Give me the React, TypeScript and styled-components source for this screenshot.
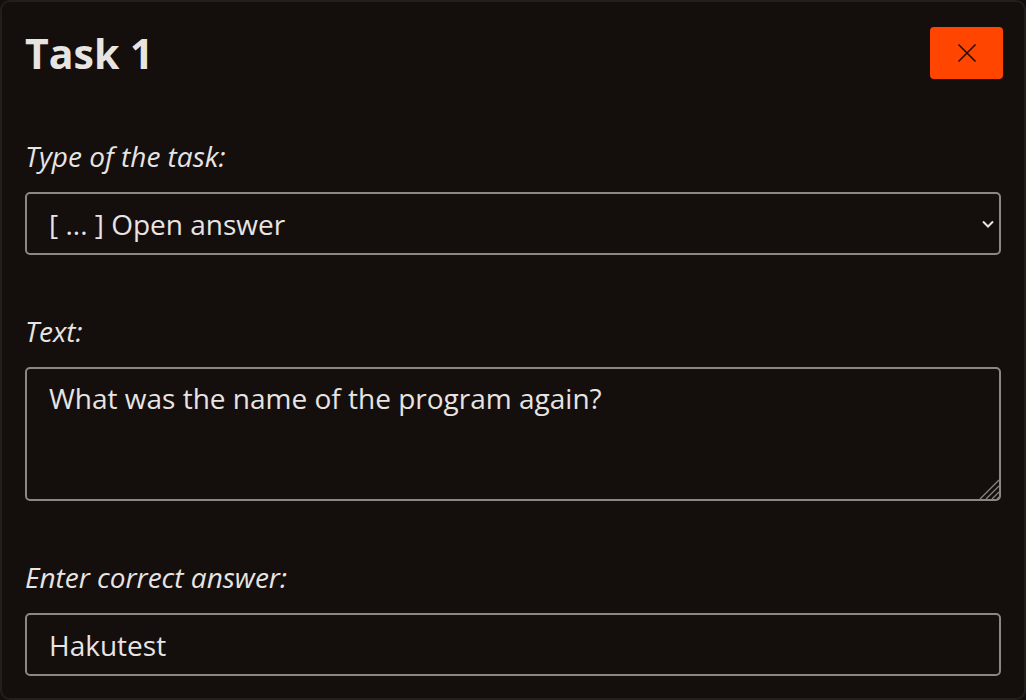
import styled, { createGlobalStyle } from "styled-components";

const GlobalStyle = createGlobalStyle`
  html, body {
    margin: 0;
    padding: 0;
    background: #140e0c;
  }
  body {
    font-family: "Open Sans", "Noto Sans", sans-serif;
    color: #e8e4e2;
  }
`

const Card = styled.div`
  box-sizing: border-box;
  width: 1026px;
  height: 700px;
  overflow: hidden;
  background: #140e0c;
  border: 2px solid #241e1b;
  border-radius: 10px;
  padding: 21px 23px 0 23px;
  display: flex;
  flex-direction: column;
  gap: 57px;
`

const Header = styled.div`
  display: flex;
  justify-content: space-between;
  align-items: flex-start;
`

const Title = styled.h1`
  margin: 4px 0 0;
  font-size: 41px;
  font-weight: 700;
  line-height: 53px;
  color: #e8e4e2;
`

const CloseButton = styled.button`
  width: 73px;
  height: 52px;
  margin: 4px -2px 0 0;
  padding: 0;
  border: none;
  border-radius: 4px;
  background: #ff4500;
  display: flex;
  align-items: center;
  justify-content: center;
  cursor: pointer;
`

const Field = styled.div`
  display: flex;
  flex-direction: column;
  gap: 17px;
`

const Label = styled.label`
  font-size: 28px;
  font-style: italic;
  line-height: 38px;
  color: #e8e4e2;
`

const inputBase = `
  box-sizing: border-box;
  width: 100%;
  background: #140e0c;
  color: #e8e4e2;
  border: 2px solid #8a8785;
  border-radius: 5px;
  font-family: "Open Sans", "Noto Sans", sans-serif;
  font-size: 28px;
  outline: none;
`

const SelectBox = styled.div`
  ${inputBase}
  position: relative;
  height: 63px;
  display: flex;
  align-items: center;
  padding: 0 22px;
`

const Chevron = styled.svg`
  position: absolute;
  right: 5px;
  top: 50%;
  margin-top: -4px;
`

const AreaWrap = styled.div`
  position: relative;
`

const TextArea = styled.textarea`
  ${inputBase}
  display: block;
  height: 134px;
  padding: 10px 22px;
  line-height: 38px;
  resize: none;
`

const Grip = styled.svg`
  position: absolute;
  right: 1px;
  bottom: 1px;
  pointer-events: none;
`

const Input = styled.input`
  ${inputBase}
  height: 63px;
  padding: 0 22px;
`

function App() {
  return (
    <>
      <GlobalStyle />
      <Card>
        <Header>
          <Title>Task 1</Title>
          <CloseButton aria-label="Close">
            <svg width="20" height="20" viewBox="0 0 20 20" fill="none" stroke="#1a0a04" strokeWidth="1.5">
              <path d="M1.5 1.5 L18.5 18.5 M18.5 1.5 L1.5 18.5" />
            </svg>
          </CloseButton>
        </Header>
        <Field>
          <Label>Type of the task:</Label>
          <SelectBox>
            [ ... ] Open answer
            <Chevron width="12" height="8" viewBox="0 0 12 8" fill="none" stroke="#e8e4e2" strokeWidth="2">
              <path d="M1 1.5 L6 6.5 L11 1.5" />
            </Chevron>
          </SelectBox>
        </Field>
        <Field>
          <Label>Text:</Label>
          <AreaWrap>
            <TextArea defaultValue="What was the name of the program again?" />
            <Grip width="22" height="22" viewBox="0 0 22 22" fill="none" stroke="#8a8785" strokeWidth="1.2">
              <path d="M2 21 L21 2 M8 21 L21 8 M14 21 L21 14 M19 21 L21 19" />
            </Grip>
          </AreaWrap>
        </Field>
        <Field>
          <Label>Enter correct answer:</Label>
          <Input defaultValue="Hakutest" />
        </Field>
      </Card>
    </>
  );
}

export default App;
